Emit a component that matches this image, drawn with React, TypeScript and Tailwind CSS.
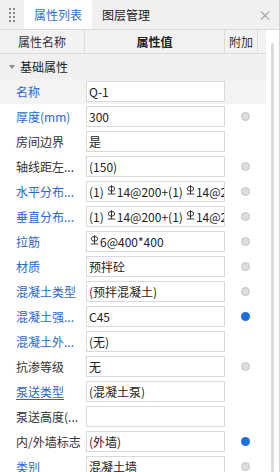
import React from "react";

const FONT = { fontFamily: '"Microsoft YaHei", "Noto Sans CJK SC", "Noto Sans", sans-serif' };

// 三级钢符号
function Rebar({ first }: { first?: boolean }) {
  return (
    <svg
      width="9"
      height="10"
      viewBox="0 0 9 10"
      className={`inline-block shrink-0 align-[2px] mr-[1px] ${first ? "ml-[1px]" : "ml-[3px]"}`}
    >
      <ellipse cx="4.5" cy="3.8" rx="3.2" ry="2.4" fill="none" stroke="#222" strokeWidth="0.9" />
      <line x1="4.5" y1="0.2" x2="4.5" y2="9" stroke="#222" strokeWidth="0.9" />
      <line x1="0.8" y1="9" x2="8.2" y2="9" stroke="#222" strokeWidth="0.9" />
    </svg>
  );
}

type Row = {
  label: string;
  blue?: boolean;
  value: React.ReactNode;
  dot?: "gray" | "blue";
  selected?: boolean;
  underline?: boolean;
};

const ROWS: Row[] = [
  { label: "名称", blue: true, value: "Q-1", selected: true },
  { label: "厚度(mm)", blue: true, value: "300", dot: "gray" },
  { label: "房间边界", value: "是" },
  { label: "轴线距左...", value: "(150)", dot: "gray" },
  {
    label: "水平分布...",
    blue: true,
    value: (
      <>
        (1)<Rebar />14@200+(1)<Rebar />14@200
      </>
    ),
    dot: "gray",
  },
  {
    label: "垂直分布...",
    blue: true,
    value: (
      <>
        (1)<Rebar />14@200+(1)<Rebar />14@200
      </>
    ),
    dot: "gray",
  },
  {
    label: "拉筋",
    blue: true,
    value: (
      <>
        <Rebar first />6@400*400
      </>
    ),
    dot: "gray",
  },
  { label: "材质", blue: true, value: "预拌砼", dot: "gray" },
  { label: "混凝土类型", blue: true, value: "(预拌混凝土)", dot: "gray" },
  { label: "混凝土强...", blue: true, value: "C45", dot: "blue" },
  { label: "混凝土外...", blue: true, value: "(无)" },
  { label: "抗渗等级", value: "无", dot: "gray" },
  { label: "泵送类型", blue: true, value: "(混凝土泵)", underline: true },
  { label: "泵送高度(...", value: "" },
  { label: "内/外墙标志", value: "(外墙)", dot: "blue" },
  { label: "类别", blue: true, value: "混凝土墙", dot: "gray" },
];

function Dot({ kind }: { kind?: "gray" | "blue" }) {
  if (!kind) return null;
  if (kind === "blue") return <span className="w-[9px] h-[9px] rounded-full bg-[#1d6fe0]" />;
  return <span className="w-[9px] h-[9px] rounded-full bg-[#dedede] border border-[#c4c4c4]" />;
}

export default function App() {
  return (
    <div className="w-[280px] h-[472px] overflow-hidden bg-white text-[12px] text-[#333] border-r border-[#d4d4d4] flex flex-col" style={FONT}>
      {/* Tabs */}
      <div className="h-[30px] shrink-0 flex items-stretch bg-[#f0f0f0] border-b border-[#dadada]">
        <div className="w-[24px] flex items-center justify-center">
          <div className="grid grid-cols-2 gap-x-[2px] gap-y-[2px]">
            {Array.from({ length: 8 }).map((_, i) => (
              <span key={i} className="w-[2px] h-[2px] bg-[#8a8a8a]" />
            ))}
          </div>
        </div>
        <div className="w-[68px] bg-white text-[#2f6fd2] flex items-center justify-center text-[12px]">属性列表</div>
        <div className="px-[10px] flex items-center text-[#222]">图层管理</div>
        <div className="flex-1" />
        <div className="w-[28px] flex items-center justify-center text-[#a0a0a0] text-[14px]">×</div>
      </div>

      <div className="flex-1 flex min-h-0">
        <div className="w-[266px] shrink-0 flex flex-col">
          {/* Header */}
          <div className="h-[24px] shrink-0 flex bg-[#f2f2f2] border-b border-[#dcdcdc]">
            <div className="w-[85px] border-r border-[#dcdcdc] flex items-center justify-center text-[#333]">属性名称</div>
            <div className="w-[140px] border-r border-[#dcdcdc] flex items-center justify-center text-[#222] font-semibold">属性值</div>
            <div className="w-[33px] border-r border-[#dcdcdc] flex items-center justify-center text-[#333]">附加</div>
          </div>
          {/* Group */}
          <div className="h-[25px] shrink-0 flex items-center bg-[#f0f0f0]">
            <span className="ml-[9px] mr-[5px] w-0 h-0 border-l-[3px] border-r-[3px] border-t-[4px] border-l-transparent border-r-transparent border-t-[#888]" />
            <span className="text-[#222]">基础属性</span>
          </div>
          {ROWS.map((r) => (
            <div key={r.label} className={`h-[25px] shrink-0 flex items-center ${r.selected ? "bg-[#f3f3f3]" : ""}`}>
              <div
                className={`w-[86px] pl-[16px] whitespace-nowrap overflow-hidden ${r.blue ? "text-[#2b66cf]" : "text-[#333]"} ${r.underline ? "underline underline-offset-2" : ""}`}
              >
                {r.label}
              </div>
              <div className="w-[139px] h-[21px] bg-white border border-[#d9d9d9] px-[2px] leading-[19px] whitespace-nowrap overflow-hidden text-[#222]">
                <span>{r.value}</span>
              </div>
              <div className="flex-1 flex items-center justify-center">
                <Dot kind={r.dot} />
              </div>
            </div>
          ))}
        </div>
        <div className="flex-1 flex justify-center pt-[13px]">
          <div className="w-[3px] h-full bg-[#dcdcdc] rounded" />
        </div>
      </div>
    </div>
  );
}
